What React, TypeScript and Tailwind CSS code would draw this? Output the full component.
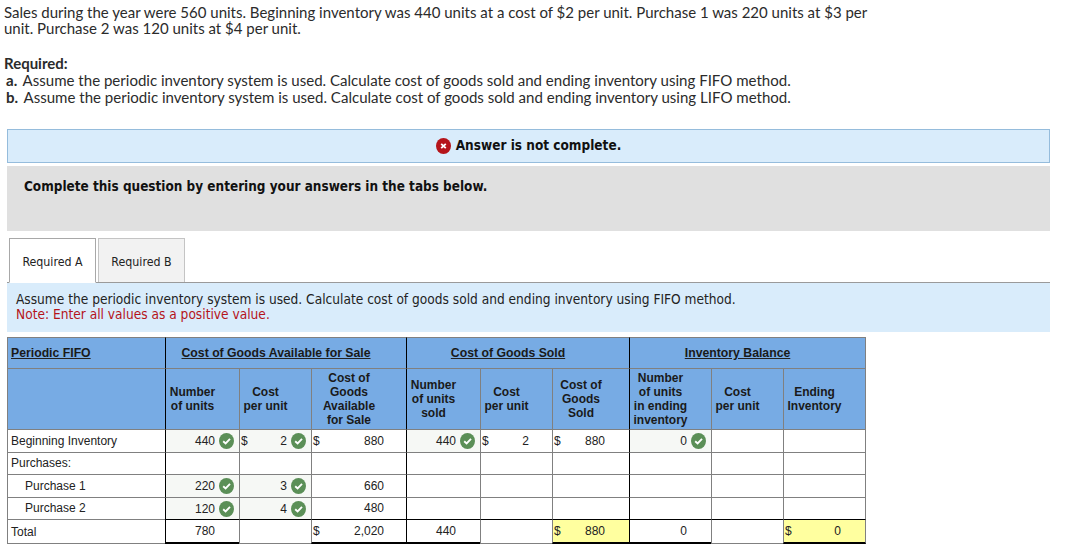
import React from "react";

const Check = () => (
  <svg width="15" height="16" viewBox="0 0 15 16" className="shrink-0">
    <ellipse cx="7.5" cy="8" rx="7.5" ry="8" fill="#5b8f57" />
    <path d="M4.2 8.2 L6.6 10.4 L11 5.9" fill="none" stroke="#fff" strokeWidth="1.9" />
  </svg>
);

const Val = ({ d, v, check, pr = "pr-0" }: { d?: boolean; v?: string; check?: boolean; pr?: string }) => (
  <div className={`flex items-center h-full pl-[1px] ${pr}`}>
    {d && <span>$</span>}
    <span className="flex-1 text-right">{v}</span>
    {check && <span className="ml-[4px] mr-[5px] flex"><Check /></span>}
  </div>
);

const g = "border-l border-t border-[#808080] p-0";
const hb = "bg-[#77abe4] border-l border-t border-[#808080] p-0 text-[#1a1a1a]";
const gl = "border-l-black";
const ok = "bg-[#f6f8f5]";
const tot = "border-b-2 border-b-black border-t-black";
const tn = "border-b border-b-[#808080] border-t-black";
const yl = "bg-[#ffff9f]";
const r = "border-r border-r-[#808080]";
const hc = "text-center pr-[20px]";

const Empty = () => (
  <>
    <td className={`${g} ${gl}`}></td><td className={g}></td><td className={g}></td>
    <td className={`${g} ${gl}`}></td><td className={g}></td><td className={g}></td>
    <td className={`${g} ${gl}`}></td><td className={g}></td><td className={`${g} ${r}`}></td>
  </>
);

const Row = ({ label, indent, cells, h, up }: { label: string; indent?: boolean; cells: React.ReactNode; h: string; up?: boolean }) => (
  <tr className={h}>
    <td className={`${g} ${indent ? "pl-[17px]" : "pl-[3px]"} ${up ? "pb-[2px]" : ""}`}>{label}</td>
    {cells}
  </tr>
);

export default function App() {
  return (
    <div className="w-[1090px] h-[551px] overflow-hidden bg-white text-[#1f1f1f]">
      <div className="pl-[4px] pt-[4px] w-[880px] text-[15px] leading-[17px] font-['Lato','Open_Sans',sans-serif] text-[#2b2b2b]">
        <p className="leading-[16px]">Sales during the year were 560 units. Beginning inventory was 440 units at a cost of $2 per unit. Purchase 1 was 220 units at $3 per<br />unit. Purchase 2 was 120 units at $4 per unit.</p>
        <p className="mt-[19px] font-bold">Required:</p>
        <p className="pl-[2px] text-[15.05px]"><b className="mr-[2px]">a.</b> Assume the periodic inventory system is used. Calculate cost of goods sold and ending inventory using FIFO method.</p>
        <p className="pl-[2px] text-[15.05px]"><b className="mr-[2px]">b.</b> Assume the periodic inventory system is used. Calculate cost of goods sold and ending inventory using LIFO method.</p>
      </div>

      <div className="ml-[7px] mt-[23px] w-[1043px] font-['DejaVu_Sans_Condensed','DejaVu_Sans',sans-serif]">
        <div className="h-[34px] bg-[#d9ecfb] border border-[#95bcdc] flex items-center justify-center font-bold text-[13.5px] leading-[15px] pb-[1px] text-[#111]">
          <svg width="15" height="16" viewBox="0 0 15 16" className="mr-[5px]">
            <ellipse cx="7.5" cy="8" rx="7.5" ry="8" fill="#b5141a" />
            <path d="M5.2 5.8 L9.8 10.2 M9.8 5.8 L5.2 10.2" stroke="#fff" strokeWidth="1.8" />
          </svg>
          Answer is not complete.
        </div>
        <div className="mt-[3px] h-[65px] bg-[#e0e0e0] pl-[17px] pt-[12px] font-bold text-[13.44px] leading-[17px] text-[#111]">
          Complete this question by entering your answers in the tabs below.
        </div>
        <div className="mt-[7px] flex items-end h-[45px] border-b border-[#9a9a9a] pl-[2px] text-[12.3px] text-[#222]">
          <div className="w-[87px] h-[45px] -mb-px pt-[3px] bg-white border border-[#a8a8a8] border-b-white flex items-center justify-center">Required A</div>
          <div className="ml-[2px] w-[87px] h-[44px] pt-[3px] bg-[#f2f2f2] border border-[#c4c4c4] border-b-0 flex items-center justify-center">Required B</div>
        </div>
        <div className="h-[49px] bg-[#d9ecfb] pl-[9px] pt-[9px] text-[13.6px] leading-[15px] text-[#222]">
          <div>Assume the periodic inventory system is used. Calculate cost of goods sold and ending inventory using FIFO method.</div>
          <div className="text-[#b5141a]">Note: Enter all values as a positive value.</div>
        </div>
      </div>

      <table className="ml-[7px] mt-[5px] w-[859px] table-fixed border-separate border-spacing-0 font-['Liberation_Sans',Arial,sans-serif] text-[12px] leading-[14px] text-[#222]">
        <colgroup>
          <col className="w-[158px]" /><col className="w-[74px]" /><col className="w-[72px]" /><col className="w-[95px]" />
          <col className="w-[74px]" /><col className="w-[72px]" /><col className="w-[77px]" />
          <col className="w-[82px]" /><col className="w-[72px]" /><col className="w-[83px]" />
        </colgroup>
        <thead>
          <tr className="h-[31px] font-bold underline text-[12.25px]">
            <td className={`${hb} pl-[3px]`}>Periodic FIFO</td>
            <td colSpan={3} className={`${hb} ${gl} ${hc}`}>Cost of Goods Available for Sale</td>
            <td colSpan={3} className={`${hb} ${gl} ${hc}`}>Cost of Goods Sold</td>
            <td colSpan={3} className={`${hb} ${gl} ${r} ${hc}`}>Inventory Balance</td>
          </tr>
          <tr className="h-[61px] font-bold">
            <td className={hb}></td>
            <td className={`${hb} ${gl} ${hc}`}>Number<br />of units</td>
            <td className={`${hb} ${hc}`}>Cost<br />per unit</td>
            <td className={`${hb} ${hc}`}>Cost of<br />Goods<br />Available<br />for Sale</td>
            <td className={`${hb} ${gl} ${hc}`}>Number<br />of units<br />sold</td>
            <td className={`${hb} ${hc}`}>Cost<br />per unit</td>
            <td className={`${hb} ${hc}`}>Cost of<br />Goods<br />Sold</td>
            <td className={`${hb} ${gl} ${hc}`}>Number<br />of units<br />in ending<br />inventory</td>
            <td className={`${hb} ${hc}`}>Cost<br />per unit</td>
            <td className={`${hb} ${r} ${hc}`}>Ending<br />Inventory</td>
          </tr>
        </thead>
        <tbody>
          <Row label="Beginning Inventory" h="h-[23px]" cells={<>
            <td className={`${g} ${gl} ${ok}`}><Val v="440" check /></td>
            <td className={`${g} ${ok}`}><Val d v="2" check /></td>
            <td className={g}><Val d v="880" pr="pr-[22px]" /></td>
            <td className={`${g} ${gl} ${ok}`}><Val v="440" check /></td>
            <td className={g}><Val d v="2" pr="pr-[23px]" /></td>
            <td className={g}><Val d v="880" pr="pr-[24px]" /></td>
            <td className={`${g} ${gl} ${ok}`}><Val v="0" check /></td>
            <td className={g}></td><td className={`${g} ${r}`}></td>
          </>} />
          <Row label="Purchases:" up h="h-[22px]" cells={<Empty />} />
          <Row label="Purchase 1" indent h="h-[23px]" cells={<>
            <td className={`${g} ${gl} ${ok}`}><Val v="220" check /></td>
            <td className={`${g} ${ok}`}><Val v="3" check /></td>
            <td className={g}><Val v="660" pr="pr-[22px]" /></td>
            <td className={`${g} ${gl}`}></td><td className={g}></td><td className={g}></td>
            <td className={`${g} ${gl}`}></td><td className={g}></td><td className={`${g} ${r}`}></td>
          </>} />
          <Row label="Purchase 2" indent up h="h-[22px]" cells={<>
            <td className={`${g} ${gl} ${ok}`}><Val v="120" check /></td>
            <td className={`${g} ${ok}`}><Val v="4" check /></td>
            <td className={`${g} pb-[2px]`}><Val v="480" pr="pr-[22px]" /></td>
            <td className={`${g} ${gl}`}></td><td className={g}></td><td className={g}></td>
            <td className={`${g} ${gl}`}></td><td className={g}></td><td className={`${g} ${r}`}></td>
          </>} />
          <tr className="h-[25px]">
            <td className={`${g} pl-[3px] border-b border-b-[#808080]`}>Total</td>
            <td className={`${g} ${gl} ${tot}`}><Val v="780" pr="pr-[24px]" /></td>
            <td className={`${g} ${tn}`}></td>
            <td className={`${g} ${tot}`}><Val d v="2,020" pr="pr-[22px]" /></td>
            <td className={`${g} ${gl} ${tot}`}><Val v="440" pr="pr-[24px]" /></td>
            <td className={`${g} ${tn}`}></td>
            <td className={`${g} ${tot} ${yl}`}><Val d v="880" pr="pr-[24px]" /></td>
            <td className={`${g} ${gl} ${tot}`}><Val v="0" pr="pr-[24px]" /></td>
            <td className={`${g} ${tn}`}></td>
            <td className={`${g} ${tot} ${yl} ${r}`}><Val d v="0" pr="pr-[24px]" /></td>
          </tr>
        </tbody>
      </table>
    </div>
  );
}
